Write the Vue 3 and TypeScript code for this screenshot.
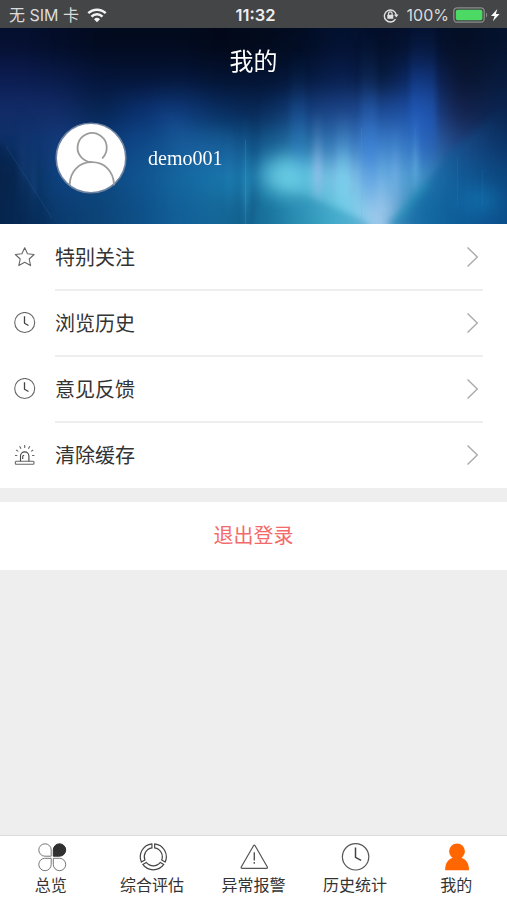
<script setup lang="ts">
interface MenuItem {
  label: string
  icon: 'star' | 'clock' | 'alarm'
}

interface TabItem {
  label: string
  icon: 'overview' | 'ring' | 'warning' | 'clock' | 'user'
}

interface Ray {
  x: number
  y: number
  w: number
  h: number
  color: string
  opacity: number
}

const menu: MenuItem[] = [
  { label: '特别关注', icon: 'star' },
  { label: '浏览历史', icon: 'clock' },
  { label: '意见反馈', icon: 'clock' },
  { label: '清除缓存', icon: 'alarm' },
]

const tabs: TabItem[] = [
  { label: '总览', icon: 'overview' },
  { label: '综合评估', icon: 'ring' },
  { label: '异常报警', icon: 'warning' },
  { label: '历史统计', icon: 'clock' },
  { label: '我的', icon: 'user' },
]

// Colour field of the banner, blurred into a smooth glow
const glow: string[][] = [
  ['#050f30', '#030d28', '#020a1e', '#020a1e', '#020a1e', '#020818', '#020a1c', '#020c22', '#031233', '#030e28', '#041232', '#040e24', '#04122e'],
  ['#0b1c50', '#081a48', '#04143a', '#041436', '#04153a', '#031230', '#031230', '#041638', '#081f50', '#061838', '#0c2c70', '#0a132e', '#081a3c'],
  ['#122c68', '#122c68', '#062450', '#0a3070', '#0f3a7c', '#082c60', '#082654', '#123c7c', '#1c4488', '#1c4a96', '#1c50a8', '#142048', '#0a2450'],
  ['#0c3068', '#133c7c', '#0b3c7c', '#0f4888', '#135894', '#145c92', '#0f4c80', '#2470a4', '#3878bc', '#3c80cc', '#3272c0', '#20407c', '#0a3468'],
  ['#082850', '#0d4484', '#0c4880', '#105490', '#1468a0', '#1878ac', '#1c78a8', '#5cc4e0', '#84c4e8', '#6cb0e4', '#4898cc', '#145c98', '#0d4880'],
  ['#082c58', '#0b3c70', '#0c4478', '#0e5088', '#12609a', '#146898', '#145c88', '#3898b8', '#68cce4', '#a8ccf0', '#1c78ac', '#10609c', '#0c508c'],
]

// Vertical streaks of light, fading out at both ends
const rays: Ray[] = [
  { x: 260, y: 60, w: 46, h: 120, color: '#3aa4d4', opacity: 0.2 },
  { x: 290, y: 20, w: 16, h: 150, color: '#2f7cc8', opacity: 0.3 },
  { x: 313, y: 80, w: 9, h: 100, color: '#b0c0f4', opacity: 0.5 },
  { x: 336, y: 80, w: 14, h: 110, color: '#7cdcf4', opacity: 0.45 },
  { x: 361, y: 0, w: 16, h: 190, color: '#3a80dc', opacity: 0.4 },
  { x: 410, y: -10, w: 26, h: 160, color: '#2462c8', opacity: 0.5 },
  { x: 413, y: 80, w: 5, h: 90, color: '#7ac4f0', opacity: 0.5 },
  { x: 392, y: 90, w: 7, h: 90, color: '#88b8f0', opacity: 0.35 },
  { x: 244, y: 80, w: 4, h: 130, color: '#3ab0dc', opacity: 0.45 },
  { x: 225, y: 90, w: 8, h: 100, color: '#2a90c4', opacity: 0.2 },
  { x: 18, y: 80, w: 10, h: 110, color: '#2a5ca8', opacity: 0.3 },
  { x: 30, y: 90, w: 6, h: 110, color: '#2a6cb8', opacity: 0.3 },
]
</script>

<template>
  <div class="screen">
    <div class="status">
      <div class="status-left">
        <span>无 SIM 卡</span>
        <svg class="wifi" width="20" height="15" viewBox="0 0 20 15">
          <g fill="none" stroke="#f4f4f4" stroke-width="2.5">
            <path d="M1.3 5.2a12.4 12.4 0 0 1 17.4 0" />
            <path d="M4.5 8.6a7.8 7.8 0 0 1 11 0" />
          </g>
          <path d="M7 11.2a4.3 4.3 0 0 1 6 0l-3 3z" fill="#f4f4f4" />
        </svg>
      </div>
      <div class="time">11:32</div>
      <div class="status-right">
        <svg class="lock" width="16" height="15" viewBox="0 0 16 15">
          <path d="M12.5 11.2A6 6 0 1 1 13.3 7" fill="none" stroke="#e2e2e2" stroke-width="1.4" />
          <path d="M11 6.6h4.6l-2.3 3z" fill="#e2e2e2" />
          <rect x="4.3" y="6.8" width="6" height="4" rx=".5" fill="#e2e2e2" />
          <path d="M5.5 7V5.6a1.8 1.8 0 0 1 3.6 0V7" fill="none" stroke="#e2e2e2" stroke-width="1.2" />
        </svg>
        <span class="percent">100%</span>
        <svg class="battery" width="48" height="16" viewBox="0 0 48 16">
          <rect x=".8" y=".8" width="30.4" height="14.4" rx="3.5" fill="none" stroke="#8b8d8d" stroke-width="1.3" />
          <rect x="2.8" y="2.8" width="26.6" height="10.4" rx="1.8" fill="#4cd964" />
          <path d="M33 5.5c1.6.8 1.6 4.2 0 5z" fill="#8b8d8d" />
          <path d="M44.3 2l-6.3 7h3.6l-1.7 5.3 6.7-7.3h-3.7z" fill="#fff" />
        </svg>
      </div>
    </div>

    <header class="banner">
      <svg class="aurora" width="507" height="196" viewBox="0 0 507 196">
        <defs>
          <linearGradient id="fade" x1="0" y1="0" x2="0" y2="1">
            <stop offset="0" stop-color="#fff" stop-opacity="0" />
            <stop offset=".3" stop-color="#fff" stop-opacity=".25" />
            <stop offset=".65" stop-color="#fff" />
            <stop offset="1" stop-color="#fff" stop-opacity="0" />
          </linearGradient>
          <mask id="ray-fade" maskContentUnits="objectBoundingBox">
            <rect width="1" height="1" fill="url(#fade)" />
          </mask>
          <filter id="soft-field" x="-20%" y="-20%" width="140%" height="140%" color-interpolation-filters="sRGB">
            <feGaussianBlur stdDeviation="15 13" />
          </filter>
          <filter id="soft-ray" color-interpolation-filters="sRGB">
            <feGaussianBlur stdDeviation="2.5 4" />
          </filter>
          <filter id="soft-edge" x="-20%" y="-20%" width="140%" height="140%" color-interpolation-filters="sRGB">
            <feGaussianBlur stdDeviation="3.5" />
          </filter>
          <filter id="soft-spot" x="-100%" y="-100%" width="300%" height="300%" color-interpolation-filters="sRGB">
            <feGaussianBlur stdDeviation="9" />
          </filter>
          <linearGradient id="left-shade" x1="0" y1="0" x2="1" y2="0">
            <stop offset="0" stop-color="#041c42" />
            <stop offset="1" stop-color="#06305e" />
          </linearGradient>
          <linearGradient id="right-shade" x1="0" y1="0" x2="1" y2="0">
            <stop offset="0" stop-color="#0d68a4" />
            <stop offset=".5" stop-color="#0d5c98" />
            <stop offset="1" stop-color="#0d4c88" stop-opacity="0" />
          </linearGradient>
        </defs>
        <rect width="507" height="196" fill="#041436" />
        <g filter="url(#soft-field)">
          <template v-for="(line, r) in glow" :key="r">
            <rect
              v-for="(color, c) in line"
              :key="c"
              :x="c === 0 ? -60 : c * 40"
              :y="r === 0 ? -50 : r * 33"
              :width="c === 0 ? 101 : c === 12 ? 100 : 41"
              :height="r === 0 ? 84 : r === 5 ? 90 : 34"
              :fill="color"
            />
          </template>
        </g>
        <path d="M152 62Q168 90 196 104L240 112V150L180 140z" fill="#2a68b4" opacity=".2" filter="url(#soft-spot)" />
        <g filter="url(#soft-ray)">
          <rect
            v-for="(ray, i) in rays"
            :key="i"
            :x="ray.x"
            :y="ray.y"
            :width="ray.w"
            :height="ray.h"
            :fill="ray.color"
            :opacity="ray.opacity"
            mask="url(#ray-fade)"
          />
        </g>
        <g filter="url(#soft-edge)">
          <path d="M-10 108L4 118 28 155 56 200 -10 210z" fill="url(#left-shade)" opacity=".55" />
          <path d="M262 156Q320 170 366 194L378 210H250z" fill="#1884b0" opacity=".4" />
          <path d="M388 200Q425 158 450 124L507 76V205z" fill="url(#right-shade)" opacity=".55" />
          <path d="M386 196L424 154 430 156 400 196z" fill="#2896bc" opacity=".5" />
        </g>
        <g filter="url(#soft-spot)">
          <ellipse cx="285" cy="148" rx="22" ry="18" fill="#80e4f4" opacity=".6" />
          <ellipse cx="480" cy="172" rx="20" ry="12" fill="#1480bc" opacity=".5" />
        </g>
        <g fill="#58b0dc">
          <rect x="245" y="112" width="1" height="84" opacity=".2" />
          <rect x="414.5" y="100" width="1" height="60" opacity=".15" />
          <rect x="361" y="100" width="1" height="92" opacity=".12" />
          <rect x="457" y="128" width="1" height="50" opacity=".08" />
          <rect x="482" y="142" width="1" height="35" opacity=".08" />
        </g>
        <path d="M6 118L52 190" stroke="#3a7cc0" opacity=".2" />
      </svg>
      <h1 class="title">我的</h1>
      <div class="profile">
        <svg class="avatar" width="72" height="72" viewBox="0 0 72 72">
          <circle cx="36" cy="36" r="34.8" fill="#fff" stroke="#7084a2" stroke-width="1.6" />
          <g fill="none" stroke="#9c9c9c" stroke-width="1.8" stroke-linecap="round">
            <path d="M47.6 35.8A14.6 14.6 0 1 0 36.8 40.2" />
            <path d="M14.7 62.5C15.2 49 24.2 40.2 36.8 40.2S58.5 49 59 62.5" />
          </g>
        </svg>
        <span class="name">demo001</span>
      </div>
    </header>

    <ul class="menu">
      <li v-for="item in menu" :key="item.label" class="row">
        <svg class="row-icon" width="22" height="22" viewBox="0 0 22 22" fill="none" stroke="#666" stroke-width="1.1" stroke-linejoin="round">
          <path v-if="item.icon === 'star'" d="M10.7 1.7l2.8 6.1 6.6.7-4.9 4.5 1.4 6.6-5.9-3.3-5.9 3.3 1.4-6.6L1.3 8.500l6.6-.7z" />
          <g v-else-if="item.icon === 'clock'">
            <circle cx="10.7" cy="10.5" r="10" />
            <path d="M10.5 4.3v6.9l4 2.3" stroke="#444" stroke-width="1.3" />
          </g>
          <g v-else>
            <rect x="1.3" y="17.3" width="18.7" height="3" rx="1" />
            <path d="M6.5 17.2v-5.1a4.2 4.2 0 0 1 8.4 0v5.1M8.7 15v-2.3q0-1.4 1.5-1.5" stroke="#444" />
            <path d="M10.7 1v3.1M5.6 2.3l1.4 2.5M15.8 2.3l-1.4 2.5M2.2 6l2.1 1.4M19.2 6l-2.1 1.4M1 11.5h2.3M20.4 11.5h-2.3" />
          </g>
        </svg>
        <span class="row-label">{{ item.label }}</span>
        <svg class="chevron" width="14" height="22" viewBox="0 0 14 22">
          <path d="M1.5 1.5L11.3 11 1.5 20.5" fill="none" stroke="#aaa" stroke-width="1.4" />
        </svg>
      </li>
    </ul>

    <button class="logout">退出登录</button>

    <nav class="tabs">
      <div v-for="tab in tabs" :key="tab.label" class="tab">
        <svg class="tab-icon" width="32" height="30" viewBox="0 0 32 30" fill="none" stroke="#555" stroke-width="1.2" stroke-linejoin="round">
          <g v-if="tab.icon === 'overview'" transform="translate(2 0)" stroke="#777" stroke-width="1">
            <path d="M14.2 14.2H7.7A6.2 6.2 0 1 1 14.2 8z" />
            <path d="M16.3 14.2V8A6.2 6.2 0 1 1 22.5 14.2z" fill="#303030" stroke="#303030" />
            <path d="M14.2 16.3H7.7A6.2 6.2 0 1 0 14.2 22.5z" />
            <path d="M16.3 16.3h6.2A6.2 6.2 0 1 1 16.3 22.5z" />
          </g>
          <g v-else-if="tab.icon === 'ring'" transform="translate(17.3 14.8)" stroke="#444">
            <path
              v-for="angle in [0, 120, 240]"
              :key="angle"
              :transform="`rotate(${angle})`"
              d="M1.36-12.93A13 13 0 0 1 11.88 5.29L8.39 3.27A9 9 0 0 0 1.36-8.9z"
            />
          </g>
          <g v-else-if="tab.icon === 'warning'" transform="translate(2.3 -.3)">
            <path d="M14.2 4q.8-1.3 1.6 0l12.1 21q.8 1.6-.9 1.6H3q-1.7 0-.9-1.6z" />
            <path d="M15 10.5v8.2M15 20.3v1.7" stroke-width="1.4" />
          </g>
          <g v-else-if="tab.icon === 'clock'" transform="translate(1 0)">
            <circle cx="15.6" cy="14.8" r="13.2" />
            <path d="M15.5 5.6v9.7l5.6 3" stroke="#444" stroke-width="1.5" />
          </g>
          <g v-else transform="translate(1.3 0)" fill="#ff6600" stroke="none">
            <circle cx="15.7" cy="9.3" r="7.9" />
            <path d="M3.8 28.2C3.8 20.5 7.5 16.8 12 15.800h7.5c4.5 1 8.2 4.7 8.2 12.4z" />
          </g>
        </svg>
        <span class="tab-label">{{ tab.label }}</span>
      </div>
    </nav>
  </div>
</template>

<style>
body {
  margin: 0;
}
</style>

<style scoped>
.screen {
  width: 507px;
  height: 900px;
  display: flex;
  flex-direction: column;
  overflow: hidden;
  background: #eee;
  color: #333;
  font-family: Inter, "Noto Sans CJK SC", sans-serif;
}

.status {
  height: 28px;
  flex: none;
  display: grid;
  grid-template-columns: 1fr auto 1fr;
  align-items: center;
  padding: 2px 5px 0 9px;
  box-sizing: border-box;
  background: #434546;
  color: #dcdcdc;
  font-size: 16px;
  line-height: 26px;
}

.status-left,
.status-right {
  display: flex;
  align-items: center;
  white-space: nowrap;
}

.status-right {
  justify-content: flex-end;
}

.wifi {
  margin-left: 8px;
}

.time {
  color: #eee;
  font-size: 16.5px;
  font-weight: 600;
}

.lock {
  margin-right: 8px;
}

.percent {
  font-size: 16px;
}

.battery {
  margin-left: 4px;
  margin-right: 1px;
}

.banner {
  position: relative;
  height: 196px;
  flex: none;
  overflow: hidden;
  color: #fff;
}

.aurora {
  position: absolute;
  inset: 0;
}

.title {
  position: relative;
  margin: 0;
  padding-top: 16px;
  text-align: center;
  font-size: 24px;
  line-height: 36px;
  font-weight: 400;
}

.profile {
  position: relative;
  display: flex;
  align-items: center;
  gap: 21px;
  padding: 42px 0 0 55px;
}

.name {
  font-family: "Liberation Serif", serif;
  font-size: 20px;
}

.menu {
  flex: none;
  margin: 0;
  padding: 0;
  list-style: none;
  background: #fff;
}

.row {
  display: grid;
  grid-template-columns: 41px 1fr 41px;
  align-items: center;
  box-sizing: border-box;
  height: 66px;
  padding: 0 0 2px 14px;
  background: linear-gradient(#eee, #eee) 55px 100% / 428px 2px no-repeat;
}

.row:first-child {
  height: 67px;
  padding-bottom: 1px;
}

.row:last-child {
  height: 65px;
  padding-bottom: 1px;
  background: none;
}

.row-label {
  font-size: 20px;
  line-height: 30px;
  padding-top: 1px;
}

.logout {
  flex: none;
  height: 68px;
  margin: 14px 0 0;
  padding: 0 0 3px;
  border: 0;
  background: #fff;
  color: #f46a6a;
  font: inherit;
  font-size: 20px;
}

.tabs {
  flex: none;
  display: grid;
  grid-template-columns: repeat(5, 1fr);
  height: 65px;
  margin-top: auto;
  box-sizing: border-box;
  border-top: 1px solid #ddd;
  background: #fff;
}

.tab {
  display: flex;
  flex-direction: column;
  align-items: center;
  padding-top: 6px;
}

.tab-icon {
  flex: none;
}

.tab-label {
  margin-top: 1px;
  font-size: 16px;
  line-height: 24px;
}
</style>
